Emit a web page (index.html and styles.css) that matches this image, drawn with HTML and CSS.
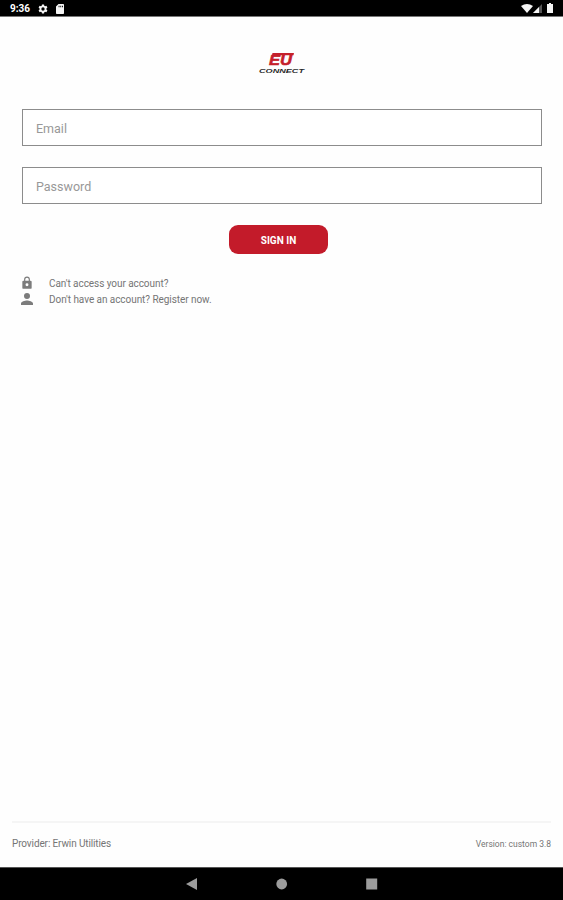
FILE: index.html
```html
<!DOCTYPE html>
<html lang="en">
<head>
  <meta charset="UTF-8" />
  <meta name="viewport" content="width=device-width, initial-scale=1" />
  <title>Sign In</title>
  <link rel="stylesheet" href="styles.css">
</head>
<body>

  <header class="status-bar">
    <span class="clock">9:36</span>
    <svg class="gear" viewBox="0 0 24 24" aria-hidden="true">
      <path fill-rule="evenodd" d="M9.5 1h5l.6 3.2 2 1.1 3-1.1 2.5 4.3-2.4 2.2v2.6l2.4 2.2-2.5 4.3-3-1.1-2 1.1-.6 3.2h-5l-.6-3.2-2-1.1-3 1.1-2.5-4.3 2.4-2.2v-2.6L1.400 8.500l2.500-4.300 3 1.100 2-1.100zM12 8a4 4 0 1 0 0 8 4 4 0 0 0 0-8z" />
    </svg>
    <svg class="sd-card" viewBox="0 0 8 10" aria-hidden="true">
      <path fill-rule="evenodd" d="M2.500 0H7.200Q8 0 8 .8V9.200Q8 10 7.200 10H.8Q0 10 0 9.200V2.500zM2.600 1.800V3.300H3.500V1.800zM4.300 1.800V3.300H5.200V1.800zM6 1.800V3.300H6.900V1.800z" />
    </svg>
    <div class="status-right">
      <svg class="wifi" viewBox="0 0 12 9" aria-hidden="true"><path d="M0 2Q6-2 12 2L6 9z" /></svg>
      <svg class="signal" viewBox="0 0 9 9" aria-hidden="true">
        <path class="dim" d="M9 0V9H0z" /><path d="M6 3V9H0z" />
      </svg>
      <svg class="battery" viewBox="0 0 6 10" aria-hidden="true"><path d="M2 0H4V1H6V10H0V1H2z" /></svg>
    </div>
  </header>

  <main class="content">
    <svg class="logo" viewBox="0 0 48 22" role="img" aria-label="EU Connect">
      <text class="logo-mark" x="11" y="13" textLength="23" lengthAdjust="spacingAndGlyphs">EU</text>
      <path class="logo-bar" d="M14.500 1H36L35.500 3.200H14z" />
      <text class="logo-name" x="1" y="20.500" textLength="45" lengthAdjust="spacingAndGlyphs">CONNECT</text>
    </svg>

    <form class="login">
      <input class="field" type="email" placeholder="Email" aria-label="Email">
      <input class="field" type="password" placeholder="Password" aria-label="Password">
      <button class="sign-in" type="button">SIGN IN</button>
    </form>

    <div class="links">
      <a class="link">
        <svg viewBox="0 0 24 24" aria-hidden="true">
          <path fill-rule="evenodd" d="M18 8h-1V6A5 5 0 0 0 7 6v2H6a2 2 0 0 0-2 2v10a2 2 0 0 0 2 2h12a2 2 0 0 0 2-2V10a2 2 0 0 0-2-2zM9 8V6a3 3 0 0 1 6 0v2zM12 12.500a2.500 2.500 0 1 1 0 5 2.500 2.500 0 0 1 0-5z" />
        </svg>
        <span>Can't access your account?</span>
      </a>
      <a class="link">
        <svg class="person" viewBox="4 4 16 16" aria-hidden="true">
          <path d="M12 12a4 4 0 1 0 0-8 4 4 0 0 0 0 8zm0 2c-2.700 0-8 1.300-8 4v2h16v-2c0-2.700-5.300-4-8-4z" />
        </svg>
        <span>Don't have an account? Register now.</span>
      </a>
    </div>
  </main>

  <footer class="footer">
    <span class="provider">Provider: Erwin Utilities</span>
    <span class="version">Version: custom 3.8</span>
  </footer>

  <nav class="nav-bar">
    <svg viewBox="0 0 12 12" aria-hidden="true"><path d="M11 0V12L0 6z" /></svg>
    <svg viewBox="0 0 12 12" aria-hidden="true"><circle cx="5.700" cy="6" r="5.400" /></svg>
    <svg viewBox="0 0 12 12" aria-hidden="true"><path d="M.2 .5H11.200V11.500H.2z" /></svg>
  </nav>

</body>
</html>
```
FILE: styles.css
```css
* {
  box-sizing: border-box;
}
body {
  margin: 0;
  height: 100vh;
  display: flex;
  flex-direction: column;
  background: #fefefe;
  color: #757575;
  font-family: Roboto, Arial, sans-serif;
}
svg {
  display: block;
  flex: none;
}
.status-bar {
  height: 17px;
  padding: 0 10px 1px;
  display: flex;
  align-items: center;
  background: #000;
  border-bottom: 1px solid #777;
  fill: #f5f5f5;
}
.clock {
  width: 28px;
  color: #fff;
  font-size: 10px;
  font-weight: 700;
  line-height: 16px;
  padding-top: 2px;
}
.gear {
  width: 10px;
  height: 10px;
  margin-top: 2px;
}
.sd-card {
  width: 8px;
  height: 10px;
  margin: 2px 0 0 8px;
}
.status-right {
  margin-left: auto;
  display: flex;
  align-items: center;
}
.wifi {
  width: 12px;
  height: 9px;
  margin-top: 2px;
}
.signal {
  width: 9px;
  height: 9px;
  margin: 2px 5px 0 0;
}
.signal .dim {
  fill: #555;
}
.battery {
  width: 6px;
  height: 10px;
}
.content {
  flex: 1;
  padding: 35px 21px 0 22px;
}
.logo {
  width: 48px;
  height: 22px;
  margin: 0 auto 35px 236px;
}
.logo-mark {
  fill: #c5202b;
  stroke: #c5202b;
  stroke-width: 0.5px;
  font: italic 700 14px "Liberation Sans", Arial, sans-serif;
}
.logo-bar {
  fill: #c5202b;
}
.logo-name {
  fill: #292929;
  font: italic 700 5.5px "Liberation Sans", Arial, sans-serif;
}
.login {
  display: flex;
  flex-direction: column;
}
.field {
  height: 37px;
  margin-bottom: 21px;
  padding: 2px 13px 0;
  border: 1px solid #8c8c8c;
  border-radius: 0;
  background: #fff;
  font: 12.5px Roboto, Arial, sans-serif;
}
.field::placeholder {
  color: #989898;
  opacity: 1;
}
.sign-in {
  width: 99px;
  height: 29px;
  margin-left: 207px;
  padding: 2px 0 0;
  border: 0;
  border-radius: 9px;
  background: #c31b2a;
  color: #fff;
  font: 700 10px Roboto, Arial, sans-serif;
}
.links {
  margin-top: 21px;
}
.link {
  height: 16px;
  display: flex;
  align-items: center;
  font-size: 10px;
  letter-spacing: -0.06px;
  line-height: 16px;
  white-space: nowrap;
}
.link svg {
  width: 14px;
  height: 14px;
  margin: 0 15px 0 -2px;
  fill: #7c7c7c;
}
.link .person {
  width: 12px;
  height: 12px;
  margin: 0 16px 0 -1px;
}
.link span {
  padding-top: 2px;
}
.footer {
  height: 46px;
  margin: 0 12px;
  padding-bottom: 3px;
  display: flex;
  justify-content: space-between;
  align-items: center;
  border-top: 2px solid #f5f5f5;
  font-size: 10px;
}
.provider {
  letter-spacing: -0.12px;
}
.version {
  font-size: 8.5px;
}
.nav-bar {
  height: 33px;
  display: flex;
  justify-content: center;
  gap: 78px;
  align-items: center;
  background: #000;
  border-top: 1px solid #555;
}
.nav-bar svg {
  width: 12px;
  height: 12px;
  fill: #9c9c9c;
}
```
